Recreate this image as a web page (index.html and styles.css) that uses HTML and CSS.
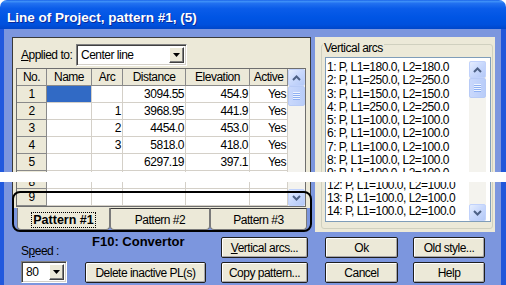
FILE: index.html
```html
<!DOCTYPE html>
<html>
<head>
<meta charset="utf-8">
<link rel="stylesheet" href="styles.css">
</head>
<body>
<div class="window">
  <div class="titlebar">Line of Project, pattern #1, (5)</div>
  <div class="client">
    <div class="top">
      <div class="tabctl">
        <div class="page">
          <div class="applied">
            <span class="lbl"><u>A</u>pplied to:</span>
            <div class="combo combo-wide">
              <span class="combo-text">Center line</span>
              <span class="drop"><svg width="7" height="4" viewBox="0 0 7 4"><polygon points="0,0 7,0 3.5,4" fill="#000"/></svg></span>
            </div>
          </div>
          <div class="grid">
            <div class="cells">
              <div class="hd">No.</div><div class="hd">Name</div><div class="hd">Arc</div><div class="hd">Distance</div><div class="hd">Elevation</div><div class="hd">Active</div>
              <div class="rn">1</div><div class="sel"></div><div class="num"></div><div class="num">3094.55</div><div class="num">454.9</div><div class="num">Yes</div>
              <div class="rn">2</div><div></div><div class="num">1</div><div class="num">3968.95</div><div class="num">441.9</div><div class="num">Yes</div>
              <div class="rn">3</div><div></div><div class="num">2</div><div class="num">4454.0</div><div class="num">453.0</div><div class="num">Yes</div>
              <div class="rn">4</div><div></div><div class="num">3</div><div class="num">5818.0</div><div class="num">418.0</div><div class="num">Yes</div>
              <div class="rn">5</div><div></div><div class="num"></div><div class="num">6297.19</div><div class="num">397.1</div><div class="num">Yes</div>
              <div class="rn cutrow">8</div><div></div><div></div><div></div><div></div><div></div>
              <div class="rn">9</div><div></div><div></div><div></div><div></div><div></div>
            </div>
            <div class="vsb">
              <div class="sbtn"><svg width="9" height="6" viewBox="0 0 9 6"><path d="M1 5 L4.5 1.5 L8 5" fill="none" stroke="#4d6185" stroke-width="2"/></svg></div>
              <div class="thumb"><span class="grip"></span></div>
              <div class="track"></div>
              <div class="sbtn"><svg width="9" height="6" viewBox="0 0 9 6"><path d="M1 1 L4.5 4.5 L8 1" fill="none" stroke="#4d6185" stroke-width="2"/></svg></div>
            </div>
          </div>
        </div>
        <div class="tabs">
          <div class="tab tab-active"><span class="focus">Pattern #1</span></div>
          <div class="tab tab-2">Pattern #2</div>
          <div class="tab tab-3">Pattern #3</div>
        </div>
      </div>
      <div class="side">
        <div class="group">
          <span class="glabel">Vertical arcs</span>
          <div class="listbox">
            <div class="items">
              <div class="upper">
                <div>1: P, L1=180.0, L2=180.0</div>
                <div>2: P, L1=250.0, L2=250.0</div>
                <div>3: P, L1=150.0, L2=150.0</div>
                <div>4: P, L1=250.0, L2=250.0</div>
                <div>5: P, L1=100.0, L2=100.0</div>
                <div>6: P, L1=100.0, L2=100.0</div>
                <div>7: P, L1=100.0, L2=100.0</div>
                <div>8: P, L1=100.0, L2=100.0</div>
                <div>9: P, L1=100.0, L2=100.0</div>
              </div>
              <div class="lower">
                <div>12: P, L1=100.0, L2=100.0</div>
                <div>13: P, L1=100.0, L2=100.0</div>
                <div>14: P, L1=100.0, L2=100.0</div>
              </div>
            </div>
            <div class="vsb lsb">
              <div class="sbtn"><svg width="9" height="6" viewBox="0 0 9 6"><path d="M1 5 L4.5 1.5 L8 5" fill="none" stroke="#4d6185" stroke-width="2"/></svg></div>
              <div class="thumb"><span class="grip"></span></div>
              <div class="track"></div>
              <div class="sbtn"><svg width="9" height="6" viewBox="0 0 9 6"><path d="M1 1 L4.5 4.5 L8 1" fill="none" stroke="#4d6185" stroke-width="2"/></svg></div>
            </div>
          </div>
        </div>
      </div>
    </div>
    <div class="bottom">
      <div class="speed">
        <span class="speed-lbl">S<u>p</u>eed :</span>
        <div class="combo combo-small">
          <span class="combo-text">80</span>
          <span class="drop"><svg width="7" height="4" viewBox="0 0 7 4"><polygon points="0,0 7,0 3.5,4" fill="#000"/></svg></span>
        </div>
      </div>
      <div class="mid">
        <span class="f10">F10: Convertor</span>
        <div class="btn">Delete inactive PL(s)</div>
      </div>
      <div class="col col3">
        <div class="btn"><span><u>V</u>ertical arcs...</span></div>
        <div class="btn">Copy pattern...</div>
      </div>
      <div class="col col4">
        <div class="btn">Ok</div>
        <div class="btn">Cancel</div>
      </div>
      <div class="col col5">
        <div class="btn">Old style...</div>
        <div class="btn">Help</div>
      </div>
    </div>
  </div>
  <div class="tear"></div>
  <div class="mark"></div>
</div>
</body>
</html>
```
FILE: styles.css
```css
* { box-sizing: border-box; }
html, body { margin: 0; padding: 0; }
body {
  width: 506px; height: 285px; overflow: hidden; background: #fff;
  font-family: "Liberation Sans", Arial, sans-serif;
  font-size: 12px; letter-spacing: -0.5px; color: #000;
}
.window { position: relative; width: 506px; height: 285px; display: flex; flex-direction: column; }
.titlebar {
  height: 29px; flex: none;
  border-radius: 7px 7px 0 0;
  background: linear-gradient(180deg, #1a63e8 0%, #3d8ff7 5%, #2170f0 12%, #0a5ce9 30%, #0055e4 60%, #0050dd 85%, #0046c9 100%);
  color: #fff; font-weight: bold; font-size: 13.5px; letter-spacing: 0;
  padding: 6px 0 0 7px; line-height: 24px; text-shadow: 1px 1px #0c2a9a;
}
.client {
  flex: 1; background: #7c96de;
  border-left: 4px solid #2159de; border-right: 5px solid #2157da;
  padding: 8px 6px 0 8px; display: flex; flex-direction: column;
}
.top { display: flex; gap: 4px; height: 195px; flex: none; }
.tabctl { width: 299px; display: flex; flex-direction: column; }
.page {
  background: #ece9d8; border: 1px solid #3a3a3a; border-bottom: 0;
  padding: 6px 4px 1px 3px;
}
.applied { display: flex; align-items: center; height: 22px; }
.lbl { width: 60px; padding-left: 5px; white-space: nowrap; }
.combo {
  height: 22px; background: #fff; display: flex; align-items: center;
  border: 1px solid; border-color: #808080 #fff #fff #808080;
  box-shadow: inset 1px 1px #404040, inset -1px -1px #d4d0c8;
}
.combo-wide { width: 111px; }
.combo-text { padding-left: 4px; flex: 1; white-space: nowrap; }
.drop {
  width: 15px; height: 16px; margin-right: 2px; background: #ece9d8;
  border: 1px solid; border-color: #fff #404040 #404040 #fff;
  box-shadow: inset -1px -1px #808080;
  display: flex; align-items: center; justify-content: center;
}
.grid { margin-top: 2px; width: 290px; border: 1px solid #6e6e6e; display: flex; background: #fff; }
.cells {
  display: grid; grid-template-columns: 30px 45px 31px 63px 64px 38px;
  grid-template-rows: repeat(6, 17px) 18px 17px;
}
.cells > div {
  border-right: 1px solid #d4d0c8; border-bottom: 1px solid #d4d0c8;
  padding: 0 2px; line-height: 16px; white-space: nowrap; overflow: hidden;
}
.cells > .hd { background: #ece9d8; text-align: center; border-color: #8a8a8a; }
.cells > .rn { background: #ece9d8; text-align: center; border-color: #8a8a8a; }
.cells > .cutrow { padding-top: 3px; }
.cells > .num { text-align: right; padding-right: 1px; }
.cells > .sel { background: #316ac5; }
.vsb { width: 17px; display: flex; flex-direction: column; background: #f4f3ee; }
.sbtn {
  height: 17px; flex: none; border: 1px solid #c1d2fb; border-radius: 2px;
  background: linear-gradient(135deg, #e6eefe 0%, #c8d8fc 50%, #b4c9f7 100%);
  display: flex; align-items: center; justify-content: center;
}
.thumb {
  height: 20px; flex: none; border: 1px solid #b8cbf6; border-radius: 2px;
  background: linear-gradient(90deg, #c9d8fc, #b9cdf9);
  display: flex; align-items: center; justify-content: center;
}
.grip { width: 7px; height: 8px; background: repeating-linear-gradient(180deg, #eef4fe 0 1px, #8fb0f3 1px 2px); }
.track { flex: 1; }
.tabs { display: flex; padding-left: 5px; height: 24px; }
.tab {
  height: 22px; background: #ece9d8; border: 1px solid #7a7a7a; border-top-color: #3a3a3a;
  border-radius: 0 0 4px 4px; display: flex; align-items: center; justify-content: center;
  padding-top: 2px; white-space: nowrap;
}
.tab-active { width: 93px; border-top: 0; font-weight: bold; font-size: 12.5px; letter-spacing: 0; }
.tab-2 { width: 100px; }
.tab-3 { width: 97px; }
.focus { outline: 1px dotted #000; padding: 0 1px; line-height: 14px; }
.side { width: 180px; background: #ece9d8; padding: 7px 2px 0 6px; }
.group {
  height: 185px; border: 1px solid #d0d0bf; border-radius: 3px;
  padding: 0 1px 0 3px; display: flex; flex-direction: column;
}
.glabel { align-self: flex-start; margin: -3px 0 0 -2px; padding: 0 1px; background: #ece9d8; line-height: 12px; }
.listbox { margin-top: 3px; width: 166px; height: 165px; border: 1px solid #7f9db9; background: #fff; display: flex; }
.items { flex: 1; display: flex; flex-direction: column; padding-left: 1px; white-space: nowrap; }
.upper { height: 124px; flex: none; overflow: hidden; padding-top: 3px; line-height: 13.25px; }
.lower { flex: 1; overflow: hidden; display: flex; flex-direction: column; justify-content: flex-end; line-height: 13px; padding-bottom: 3px; }
.lower > div { flex-shrink: 0; }
.lsb { margin: 3px 4px 0 0; }
.bottom { display: flex; margin-top: 5px; height: 46px; }
.speed { margin-left: 9px; width: 46px; display: flex; flex-direction: column; }
.speed-lbl { margin-top: 7px; line-height: 14px; }
.combo-small { margin-top: 3px; width: 46px; }
.mid { margin-left: 18px; width: 121px; display: flex; flex-direction: column; justify-content: space-between; }
.f10 { margin-top: -2px; padding-left: 7px; line-height: 14px; font-weight: bold; font-size: 13px; letter-spacing: 0; white-space: nowrap; }
.col { display: flex; flex-direction: column; gap: 4px; }
.col3 { margin-left: 15px; width: 87px; }
.col4 { margin-left: 17px; width: 73px; }
.col5 { margin-left: 15px; width: 72px; }
.btn {
  height: 21px; flex: none; border: 1px solid #1e1e1e; border-radius: 2px; background: #ece9d8;
  box-shadow: inset 1px 1px #fff, inset -1px -1px #a7a6aa;
  display: flex; align-items: center; justify-content: center; white-space: nowrap;
}
.tear { position: absolute; left: 0; top: 172px; width: 506px; height: 10px; background: #fff; }
.mark { position: absolute; left: 12px; top: 191px; width: 300px; height: 41px; border: 2px solid #000; border-radius: 8px; }
```
